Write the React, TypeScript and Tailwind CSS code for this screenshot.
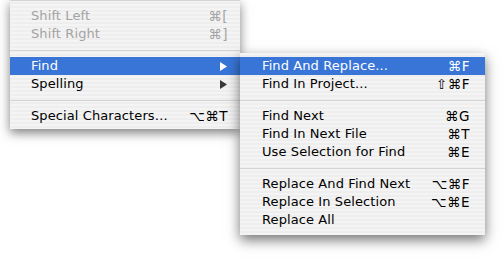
import type { ReactNode } from 'react'

type Item =
  | { kind: 'sep' }
  | { kind: 'item'; label: string; keys?: string; sub?: boolean; disabled?: boolean; active?: boolean }

const leftItems: Item[] = [
  { kind: 'item', label: 'Shift Left', keys: '⌘[', disabled: true },
  { kind: 'item', label: 'Shift Right', keys: '⌘]', disabled: true },
  { kind: 'sep' },
  { kind: 'item', label: 'Find', sub: true, active: true },
  { kind: 'item', label: 'Spelling', sub: true },
  { kind: 'sep' },
  { kind: 'item', label: 'Special Characters…', keys: '⌥⌘T' },
]

const findItems: Item[] = [
  { kind: 'item', label: 'Find And Replace...', keys: '⌘F', active: true },
  { kind: 'item', label: 'Find In Project...', keys: '⇧⌘F' },
  { kind: 'sep' },
  { kind: 'item', label: 'Find Next', keys: '⌘G' },
  { kind: 'item', label: 'Find In Next File', keys: '⌘T' },
  { kind: 'item', label: 'Use Selection for Find', keys: '⌘E' },
  { kind: 'sep' },
  { kind: 'item', label: 'Replace And Find Next', keys: '⌥⌘F' },
  { kind: 'item', label: 'Replace In Selection', keys: '⌥⌘E' },
  { kind: 'item', label: 'Replace All' },
]

function Arrow({ active }: { active?: boolean }) {
  return (
    <svg width="7" height="9" viewBox="0 0 7 9" className="mr-[1px]">
      <path d="M0 0 L7 4.5 L0 9 Z" fill={active ? '#ffffff' : '#3a3a3a'} />
    </svg>
  )
}

function Menu({ items, padLeft, padRight }: { items: Item[]; padLeft: string; padRight: string }) {
  return (
    <>
      {items.map((item, i) => {
        if (item.kind === 'sep') {
          return (
            <div key={i} className="h-[14px] flex items-center">
              <div className="h-px w-full bg-[#d4d4d4]" />
            </div>
          )
        }
        const color = item.active ? 'bg-[#3875d7] text-white' : item.disabled ? 'text-[#a3a3a3]' : 'text-black'
        let right: ReactNode = null
        if (item.sub) right = <Arrow active={item.active} />
        else if (item.keys) right = <span className="text-[13.5px] tracking-[0.5px]">{item.keys}</span>
        return (
          <div key={i} className={`h-[18px] leading-[18px] flex items-center justify-between ${padLeft} ${padRight} ${color}`}>
            <span className="tracking-[0.1px]">{item.label}</span>
            {right}
          </div>
        )
      })}
    </>
  )
}

const stripes =
  'bg-[repeating-linear-gradient(to_bottom,#f4f4f4_0px,#f4f4f4_2px,#eeeeee_2px,#eeeeee_4px)]'

export default function App() {
  return (
    <div
      className="w-[504px] h-[265px] bg-white overflow-hidden flex items-start text-[13px]"
      style={{ fontFamily: '"DejaVu Sans", "Noto Sans", sans-serif' }}
    >
      {/* main edit menu, cut off at the top */}
      <div className={`ml-[10px] w-[230px] pb-[4px] ${stripes} shadow-[0_4px_10px_rgba(0,0,0,0.5)]`}>
        <div className="h-px bg-[#d4d4d4]" />
        <div className="h-[6px]" />
        <Menu items={leftItems} padLeft="pl-[21px]" padRight="pr-[12px]" />
      </div>

      {/* find submenu */}
      <div className={`mt-[53px] w-[245px] pt-[4px] pb-[6px] ${stripes} shadow-[0_5px_12px_rgba(0,0,0,0.55)]`}>
        <Menu items={findItems} padLeft="pl-[22px]" padRight="pr-[15px]" />
      </div>
    </div>
  )
}
